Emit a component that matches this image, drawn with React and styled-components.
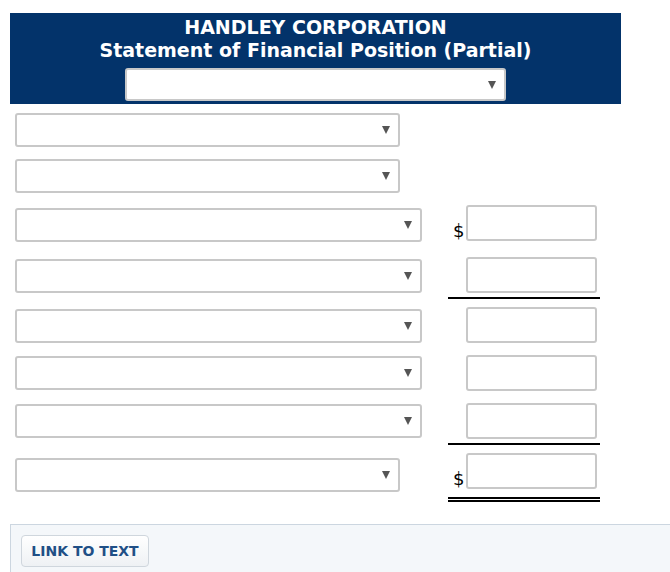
import React from 'react'
import styled, { createGlobalStyle } from 'styled-components'

const GlobalStyle = createGlobalStyle`
  body {
    margin: 0;
    background: #fff;
    font-family: "DejaVu Sans", Verdana, sans-serif;
  }
`;

const rows = [
  { top: 9, sel: 0, width: 385 },
  { top: 12, sel: 0, width: 385 },
  { top: 12, sel: 3, width: 407, amount: true, dollar: true },
  { top: 15, sel: 2, width: 407, amount: true, line: 'single' },
  { top: 8, sel: 2, width: 407, amount: true },
  { top: 12, sel: 1, width: 407, amount: true },
  { top: 12, sel: 1, width: 407, amount: true, line: 'single' },
  { top: 8, sel: 5, width: 385, amount: true, dollar: true, line: 'double' },
]

export default function App() {
  return (
    <>
      <GlobalStyle />
      <Page>
        <Header>
          <Title>HANDLEY CORPORATION</Title>
          <Title>Statement of Financial Position (Partial)</Title>
          <HeaderSelect>
            <Arrow />
          </HeaderSelect>
        </Header>
        <Body>
          {rows.map((r, i) => (
            <Row key={i} $top={r.top}>
              <SelectCell>
                <Select $w={r.width} $offset={r.sel}>
                  <Arrow />
                </Select>
              </SelectCell>
              {r.amount && (
                <AmountCell $line={r.line}>
                  <Dollar>{r.dollar ? '$' : ''}</Dollar>
                  <Input />
                </AmountCell>
              )}
            </Row>
          ))}
        </Body>
      </Page>
      <Footer>
        <LinkButton>LINK TO TEXT</LinkButton>
      </Footer>
    </>
  )
}

const Page = styled.div`
  padding: 13px 0 0 10px;
  height: 524px;
  box-sizing: border-box;
`;
const Header = styled.div`
  width: 611px;
  height: 91px;
  background-color: #03336a;
  display: flex;
  flex-direction: column;
  align-items: center;
  padding-top: 3px;
  box-sizing: border-box;
`;
const Title = styled.div`
  color: #fff;
  font-family: Tahoma, "DejaVu Sans", Verdana, sans-serif;
  font-weight: bold;
  font-size: 19px;
  line-height: 23px;
`;
const HeaderSelect = styled.div`
  margin-top: 6px;
  width: 381px;
  height: 33px;
  box-sizing: border-box;
  background: #fff;
  border: 2px solid #c8c8c8;
  border-radius: 3px;
  position: relative;
`;
const Body = styled.div`
  padding-left: 5px;
`;
const Row = styled.div`
  display: flex;
  align-items: flex-start;
  margin-top: ${p => p.$top}px;
`;
const SelectCell = styled.div`
  width: 433px;
`;
const Select = styled.div`
  position: relative;
  margin-top: ${p => p.$offset}px;
  width: ${p => p.$w}px;
  height: 34px;
  box-sizing: border-box;
  background: #fff;
  border: 2px solid #c8c8c8;
  border-radius: 3px;
`;
const Arrow = styled.span`
  position: absolute;
  right: 8px;
  top: 50%;
  margin-top: -4px;
  width: 0;
  height: 0;
  border-left: 4.5px solid transparent;
  border-right: 4.5px solid transparent;
  border-top: 8px solid #555;
`;
const AmountCell = styled.div`
  display: flex;
  align-items: flex-end;
  width: 152px;
  padding-bottom: ${p => (p.$line === 'single' ? 4 : p.$line === 'double' ? 8 : 0)}px;
  border-bottom: ${p =>
    p.$line === 'single' ? '2px solid #000' : p.$line === 'double' ? '5px double #000' : 'none'};
`;
const Dollar = styled.span`
  width: 18px;
  font-family: "DejaVu Sans", Verdana, sans-serif;
  font-size: 18px;
  line-height: 20px;
  padding-left: 5px;
  box-sizing: border-box;
  color: #000;
`;
const Input = styled.div`
  width: 131px;
  height: 36px;
  box-sizing: border-box;
  border: 2px solid #c8c8c8;
  border-radius: 3px;
  background: #fff;
`;
const Footer = styled.div`
  margin-left: 10px;
  height: 48px;
  background: #f4f7fa;
  border-top: 1px solid #ccd6e0;
  border-left: 1px solid #ccd6e0;
  padding: 10px 0 0 10px;
  box-sizing: border-box;
`;
const LinkButton = styled.button`
  width: 128px;
  height: 32px;
  border: 1px solid #cfd6dd;
  border-radius: 4px;
  background: linear-gradient(#ffffff, #eef1f4);
  color: #1f4f86;
  font-family: Tahoma, "DejaVu Sans", Verdana, sans-serif;
  font-weight: bold;
  font-size: 14px;
  padding: 0;
  cursor: pointer;
`;
